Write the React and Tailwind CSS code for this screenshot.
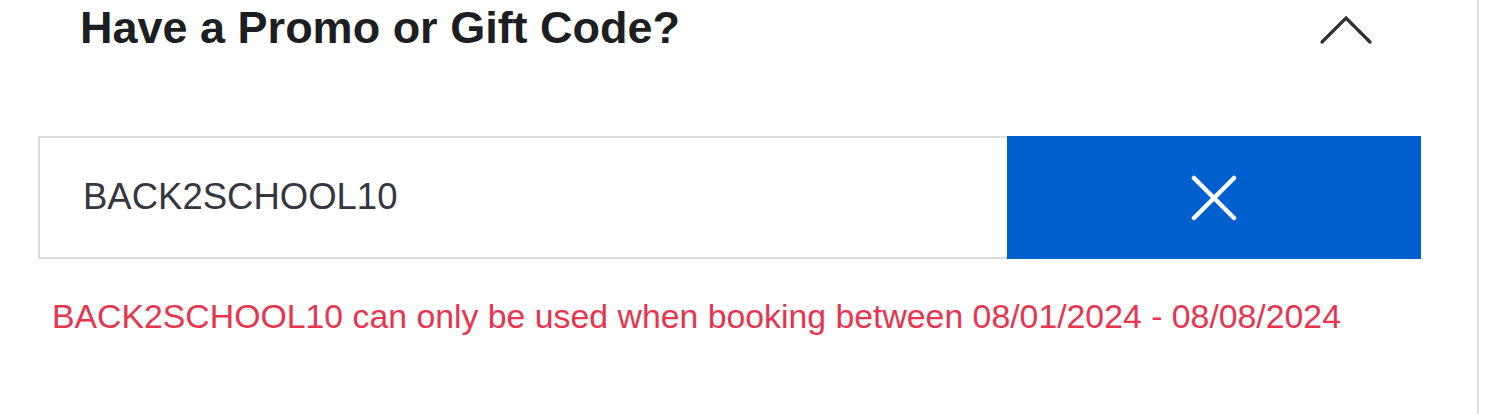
function ChevronUp() {
  return (
    <svg width="54" height="32" viewBox="0 0 54 32" fill="none">
      <path
        d="M3 28 L27 4 L51 28"
        stroke="#2f3033"
        strokeWidth="3.2"
        strokeLinecap="round"
        strokeLinejoin="miter"
      />
    </svg>
  );
}

function CloseIcon() {
  return (
    <svg width="46" height="46" viewBox="0 0 46 46" fill="none">
      <path
        d="M3 3 L43 43 M43 3 L3 43"
        stroke="#ffffff"
        strokeWidth="4.5"
        strokeLinecap="round"
      />
    </svg>
  );
}

function PromoCode() {
  return (
    <div className="flex-1 pt-[5px]">
      <div className="flex items-start justify-between pl-[80px] pr-[104px]">
        <h2 className="text-[45px] font-bold leading-[45px] text-[#1d1e22]">
          Have a Promo or Gift Code?
        </h2>
        <div className="mt-[9px]">
          <ChevronUp />
        </div>
      </div>

      <div className="mt-[86px] ml-[38px] flex h-[123px] w-[1383px]">
        <div className="flex flex-1 items-center border-2 border-r-0 border-[#dcdcdc] pl-[43px]">
          <span className="text-[36.5px] text-[#35363f]">BACK2SCHOOL10</span>
        </div>
        <button
          type="button"
          className="flex w-[414px] items-center justify-center bg-[#005fcf]"
        >
          <CloseIcon />
        </button>
      </div>

      <p className="mt-[40px] ml-[52px] text-[33.8px] leading-[34px] text-[#e8344f]">
        BACK2SCHOOL10 can only be used when booking between 08/01/2024 -
        08/08/2024
      </p>
    </div>
  );
}

export default function App() {
  return (
    <div
      className="flex h-[414px] w-[1500px] bg-white"
      style={{ fontFamily: '"Liberation Sans", Arial, sans-serif' }}
    >
      <PromoCode />
      <div className="w-[23px] border-l-2 border-[#dedede]" />
    </div>
  );
}
